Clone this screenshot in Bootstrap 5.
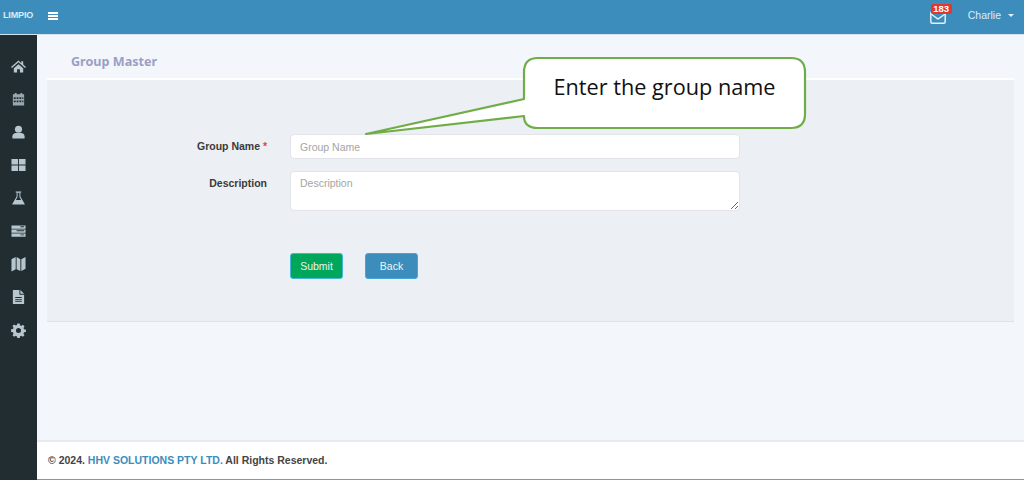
<!DOCTYPE html>
<html lang="en">
<head>
<meta charset="utf-8">
<title>Group Master</title>
<link href="https://cdn.jsdelivr.net/npm/bootstrap@5.3.0/dist/css/bootstrap.min.css" rel="stylesheet">
<style>
html,body{height:480px;overflow:hidden}
body{font-family:"Liberation Sans",Arial,sans-serif;font-size:11px;color:#333;background:#f3f6fb;position:relative}
.topbar{height:35px;background:#3c8dbc;border-bottom:1px solid #d5e3ee;color:#fff;padding-bottom:2px}
.brand{width:37px;font-size:9px;font-weight:700;padding-left:3px;color:#dcecf6;letter-spacing:-.15px}
.burger{width:10px;height:8px;border-top:2px solid #fff;border-bottom:2px solid #fff;position:relative;margin-left:11px}
.burger::after{content:"";position:absolute;left:0;right:0;top:1px;height:2px;background:#fff}
.mailbox{position:relative;margin-right:22px;width:16px;height:13px;margin-top:3px}
.mailbox svg{display:block}
.count{position:absolute;left:1px;top:-7px;background:#e0382f;color:#fff;font-size:9.5px;font-weight:700;line-height:10px;padding:0 2.5px;border-radius:2px}
.who{font-size:10.5px;color:#dcecf6;margin-right:10px}
.who::after{content:"";display:inline-block;margin-left:7px;vertical-align:2px;border-top:3px solid #e3f0f8;border-left:3px solid transparent;border-right:3px solid transparent}
.shell{height:445px}
.rail{width:37px;flex:none;background:#222d32;padding-top:23px;gap:17px}
.rail svg{width:15px;height:16px;fill:#b8c7ce;display:block;margin:0 auto}
.work{min-width:0}
.heading{flex:none;height:43px;padding:18px 0 0 34px;font-family:"Noto Sans",sans-serif;font-size:12.6px;font-weight:700;color:#9a9fc4;line-height:18px}
.panel{flex:none;margin-left:10px;margin-right:10px;height:244px;background:#eceff4;border-top:2px solid #fff;border-bottom:1px solid #dfe2e8;padding-top:54px}
.lbl{width:243px;flex:none;text-align:right;font-weight:700;color:#3a3a3a;font-size:10.5px;padding:1px 23px 0 0}
.req{color:#e5404c}
.field{width:450px;font-size:10.5px;border:1px solid #e2e4ea;border-radius:4px;padding:0 9px;background:#fff;height:25px;box-shadow:none;color:#333}
.field::placeholder{color:#a5a5a5}
textarea.field{height:40px;padding-top:4px;min-height:40px}
.lbl-top{padding-top:5px}
.act-row{padding:42px 0 0 243px}
.act{font-size:10.5px;height:26px;line-height:24px;padding:0;color:#eaf5f0;border:1px solid #45b5d8;border-radius:3px}
.go{width:53px;background:#00a65a}
.bk{width:53px;background:#3c8dbc;margin-left:22px;border-color:#4aa5d6}
.foot{flex:none;height:40px;background:#fff;border-top:2px solid #e8eaf0;margin-top:auto;padding:0 0 0 11px;font-size:10.5px;font-weight:700;color:#444;line-height:36px;border-bottom:1px solid #8f949c}
.foot a{color:#3c8dbc;text-decoration:none}
.callout{position:absolute;left:360px;top:55px;width:450px;height:85px;overflow:visible}
.callout-text{position:absolute;left:523px;top:73px;width:283px;text-align:center;font-family:"Open Sans","Noto Sans",sans-serif;font-size:21.7px;line-height:28px;color:#111}
</style>
</head>
<body>
<nav class="topbar d-flex align-items-center">
  <div class="brand">LIMPIO</div>
  <div class="burger"></div>
  <div class="ms-auto d-flex align-items-center">
    <div class="mailbox">
      <svg width="16" height="13" viewBox="0 0 16 13" fill="none" stroke="#e3f0f8" stroke-width="1.5"><rect x=".8" y=".8" width="14.400" height="11.400" rx="1.500"/><path d="M1 3l7 5 7-5"/></svg>
      <span class="count">183</span>
    </div>
    <span class="who">Charlie</span>
  </div>
</nav>
<div class="shell d-flex">
  <aside class="rail d-flex flex-column">
    <svg viewBox="0 0 16 16"><path d="M8 2 0 9l1 1 7-6 7 6 1-1-3-2.600V3h-2v2zM3 10.500V15h3.500v-3.500h3V15H13v-4.500L8 6z"/></svg>
    <svg viewBox="0 0 16 16"><path fill-rule="evenodd" opacity=".8" d="M2 3h2V1.500h2V3h4V1.500h2V3h2v12H2zm1 3v2h2V6zm3 0v2h2V6zm3 0v2h2V6zM3 9.500v2h2v-2zm3 0v2h2v-2zm3 0v2h2v-2zM12 6v2h1.200V6zm0 3.500v2h1.200v-2z"/></svg>
    <svg viewBox="0 0 16 16"><circle cx="8" cy="5" r="3.800"/><path d="M1.500 15v-2.500C1.500 10 4 9 5 9h6c1 0 3.500 1 3.500 3.500V15z"/></svg>
    <svg viewBox="0 0 16 16"><path d="M.5 1.500h7v6h-7zm8 0h7v6h-7zm-8 7h7v6h-7zm8 0h7v6h-7z"/></svg>
    <svg viewBox="0 0 16 16"><path fill-rule="evenodd" d="M5 1h6v1.200h-1v4.300l4.500 7.500c.3.600 0 1-.6 1H2.100c-.6 0-.9-.4-.6-1L6 6.500V2.200H5zM7 2.500v4.300L5.200 10h5.600L9 6.800V2.500z"/></svg>
    <svg viewBox="0 0 16 16"><path fill-rule="evenodd" d="M.5 2h15v3.500H.5zm9.500 1v1h4V3zM.5 6.300h15v3.500H.5zm5.500 1v1h8v-1zM.5 10.600h15v3.500H.5zm9.500 1v1h4v-1z"/></svg>
    <svg viewBox="0 0 16 16"><path d="M.5 3 5 .5v13L.5 16zM6 .5l4 2.500v12.500L6 13.500zM11 3 15.500.5v12.500L11 15.500z"/></svg>
    <svg viewBox="0 0 16 16"><path fill-rule="evenodd" d="M2 .5h7v5h5v10H2zM10 .5l4 4h-4zM4.500 8v1h7V8zm0 2v1h7v-1zm0 2v1h7v-1z"/></svg>
    <svg viewBox="0 0 16 16"><path fill-rule="evenodd" d="M6.800 1h2.400l.4 2 1.400.6 1.700-1.100 1.700 1.700-1.100 1.700.6 1.400 2 .4v2.400l-2 .4-.6 1.400 1.100 1.700-1.700 1.700-1.700-1.100-1.400.6-.4 2H6.800l-.4-2-1.400-.6-1.700 1.100-1.700-1.700 1.100-1.700-.6-1.400-2-.4V7.300l2-.4.6-1.400-1.100-1.700 1.700-1.700L5 3.200l1.400-.6zM8 5.800a2.700 2.700 0 1 0 0 5.400 2.700 2.700 0 0 0 0-5.400z"/></svg>
  </aside>
  <main class="work flex-grow-1 d-flex flex-column">
    <div class="heading">Group Master</div>
    <section class="panel">
      <form>
        <div class="d-flex align-items-center mb-2 pb-1">
          <label class="lbl" for="gn">Group Name <span class="req">*</span></label>
          <input id="gn" class="form-control field" placeholder="Group Name">
        </div>
        <div class="d-flex align-items-start">
          <label class="lbl lbl-top" for="ds">Description</label>
          <textarea id="ds" class="form-control field" placeholder="Description"></textarea>
        </div>
        <div class="d-flex act-row">
          <button type="button" class="btn act go">Submit</button>
          <button type="button" class="btn act bk">Back</button>
        </div>
      </form>
    </section>
    <footer class="foot">© 2024. <a href="#">HHV SOLUTIONS PTY LTD.</a> All Rights Reserved.</footer>
  </main>
</div>
<svg class="callout" viewBox="360 55 450 85"><path d="M366 134 524 99V72Q524 58 538 58H791Q805 58 805 72V114Q805 128 791 128H538Q524 128 524 116Z" fill="#fff" stroke="#70ad47" stroke-width="2.200" stroke-linejoin="round"/></svg>
<div class="callout-text">Enter the group name</div>
</body>
</html>
